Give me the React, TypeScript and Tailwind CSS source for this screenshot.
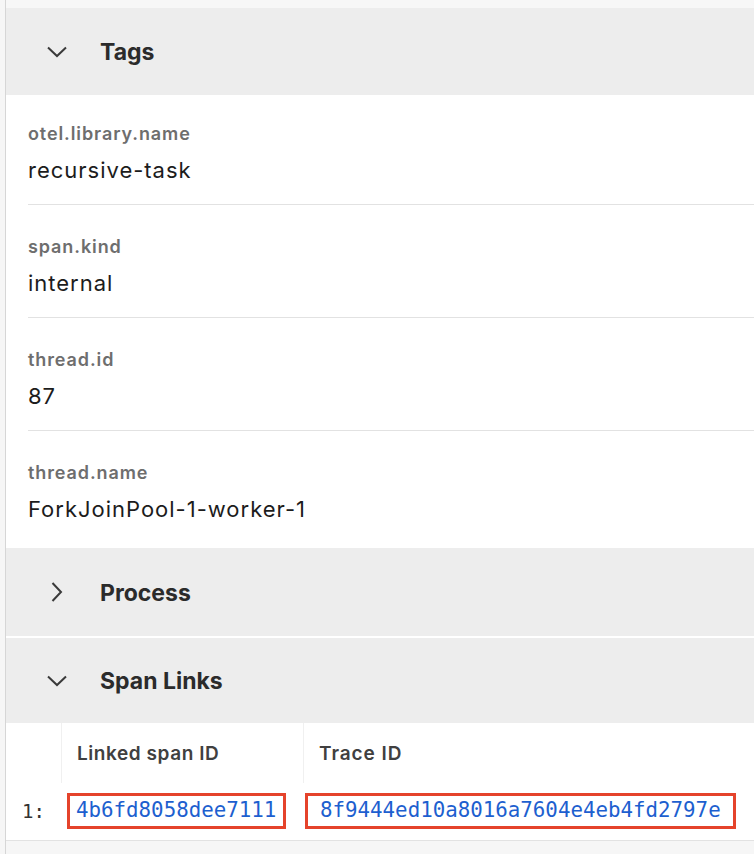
const TAGS = [
  { key: "otel.library.name", value: "recursive-task" },
  { key: "span.kind", value: "internal" },
  { key: "thread.id", value: "87" },
  { key: "thread.name", value: "ForkJoinPool-1-worker-1" },
];

const LINKS = [{ spanId: "4b6fd8058dee7111", traceId: "8f9444ed10a8016a7604e4eb4fd2797e" }];

function Chevron({ open }: { open: boolean }) {
  return (
    <span className="flex w-[20px] items-center justify-center">
      {open ? (
        <svg width="20" height="12" viewBox="0 0 20 12" fill="none">
          <path d="M1 1.5 L10 10 L19 1.5" stroke="#3a3a3a" strokeWidth="2" />
        </svg>
      ) : (
        <svg width="12" height="20" viewBox="0 0 12 20" fill="none">
          <path d="M1.5 1 L10 10 L1.5 19" stroke="#3a3a3a" strokeWidth="2" />
        </svg>
      )}
    </span>
  );
}

function SectionHeader({ title, open, className = "" }: { title: string; open: boolean; className?: string }) {
  return (
    <div className={`flex items-center bg-[#ededed] pl-[41px] ${className}`}>
      <Chevron open={open} />
      <span className="ml-[33px] pt-[2px] text-[23px] font-bold text-[#2b2b2b]">{title}</span>
    </div>
  );
}

export default function App() {
  return (
    <div className="min-h-screen bg-[#f6f6f6] pl-[5px]" style={{ fontFamily: "Inter, 'Noto Sans', sans-serif" }}>
      <div className="border-l border-[#d6d6d6]">
        <div className="h-[8px] bg-[#f7f7f7]" />

        {/* Tags */}
        <SectionHeader title="Tags" open className="h-[87px]" />
        <div className="bg-white pl-[22px]">
          {TAGS.map((t, i) => (
            <div
              key={t.key}
              className={`${i === 0 ? "pt-[27px]" : "pt-[30px]"} ${
                i === TAGS.length - 1 ? "pb-[24px]" : "border-b border-[#e2e2e2] pb-[19px]"
              }`}
            >
              <div className="text-[18px] leading-[24px] font-semibold tracking-[0.05em] text-[#6e6e6e]">{t.key}</div>
              <div className="mt-[9px] text-[22px] leading-[30px] tracking-[0.045em] text-[#1c1c1c]">{t.value}</div>
            </div>
          ))}
        </div>

        {/* Process */}
        <SectionHeader title="Process" open={false} className="h-[88px]" />
        <div className="h-[2px] bg-white" />

        {/* Span Links */}
        <SectionHeader title="Span Links" open className="h-[85px]" />
        <div className="bg-white">
          <div className="grid h-[60px] grid-cols-[56px_242px_1fr]">
            <div className="border-r border-[#f0f0f0]" />
            <div className="flex items-center border-r border-[#f0f0f0] pl-[15px] pt-[2px] text-[19px] font-semibold tracking-[0.03em] text-[#404040]">
              Linked span ID
            </div>
            <div className="flex items-center pl-[15px] pt-[2px] text-[19px] font-semibold tracking-[0.05em] text-[#404040]">
              Trace ID
            </div>
          </div>
          {LINKS.map((l, i) => (
            <div
              key={l.spanId}
              className="grid h-[57px] grid-cols-[56px_243px_1fr] items-start pt-[10px]"
              style={{ fontFamily: "'DejaVu Sans Mono', monospace" }}
            >
              <div className="flex h-[36px] items-center pl-[16px] text-[19px] text-[#333]">{i + 1}:</div>
              <div className="pl-[5px]">
                <span className="inline-flex h-[36px] items-center border-[3px] border-[#e5432b] pl-[6px] pr-[7px] text-[20.8px] text-[#1d5fcf]">
                  {l.spanId}
                </span>
              </div>
              <div>
                <span className="inline-flex h-[36px] items-center border-[3px] border-[#e5432b] pl-[12px] pr-[12px] text-[20.8px] text-[#1d5fcf]">
                  {l.traceId}
                </span>
              </div>
            </div>
          ))}
        </div>
        <div className="h-[20px] border-t border-[#e2e2e2] bg-[#f6f6f6]" />
      </div>
    </div>
  );
}
